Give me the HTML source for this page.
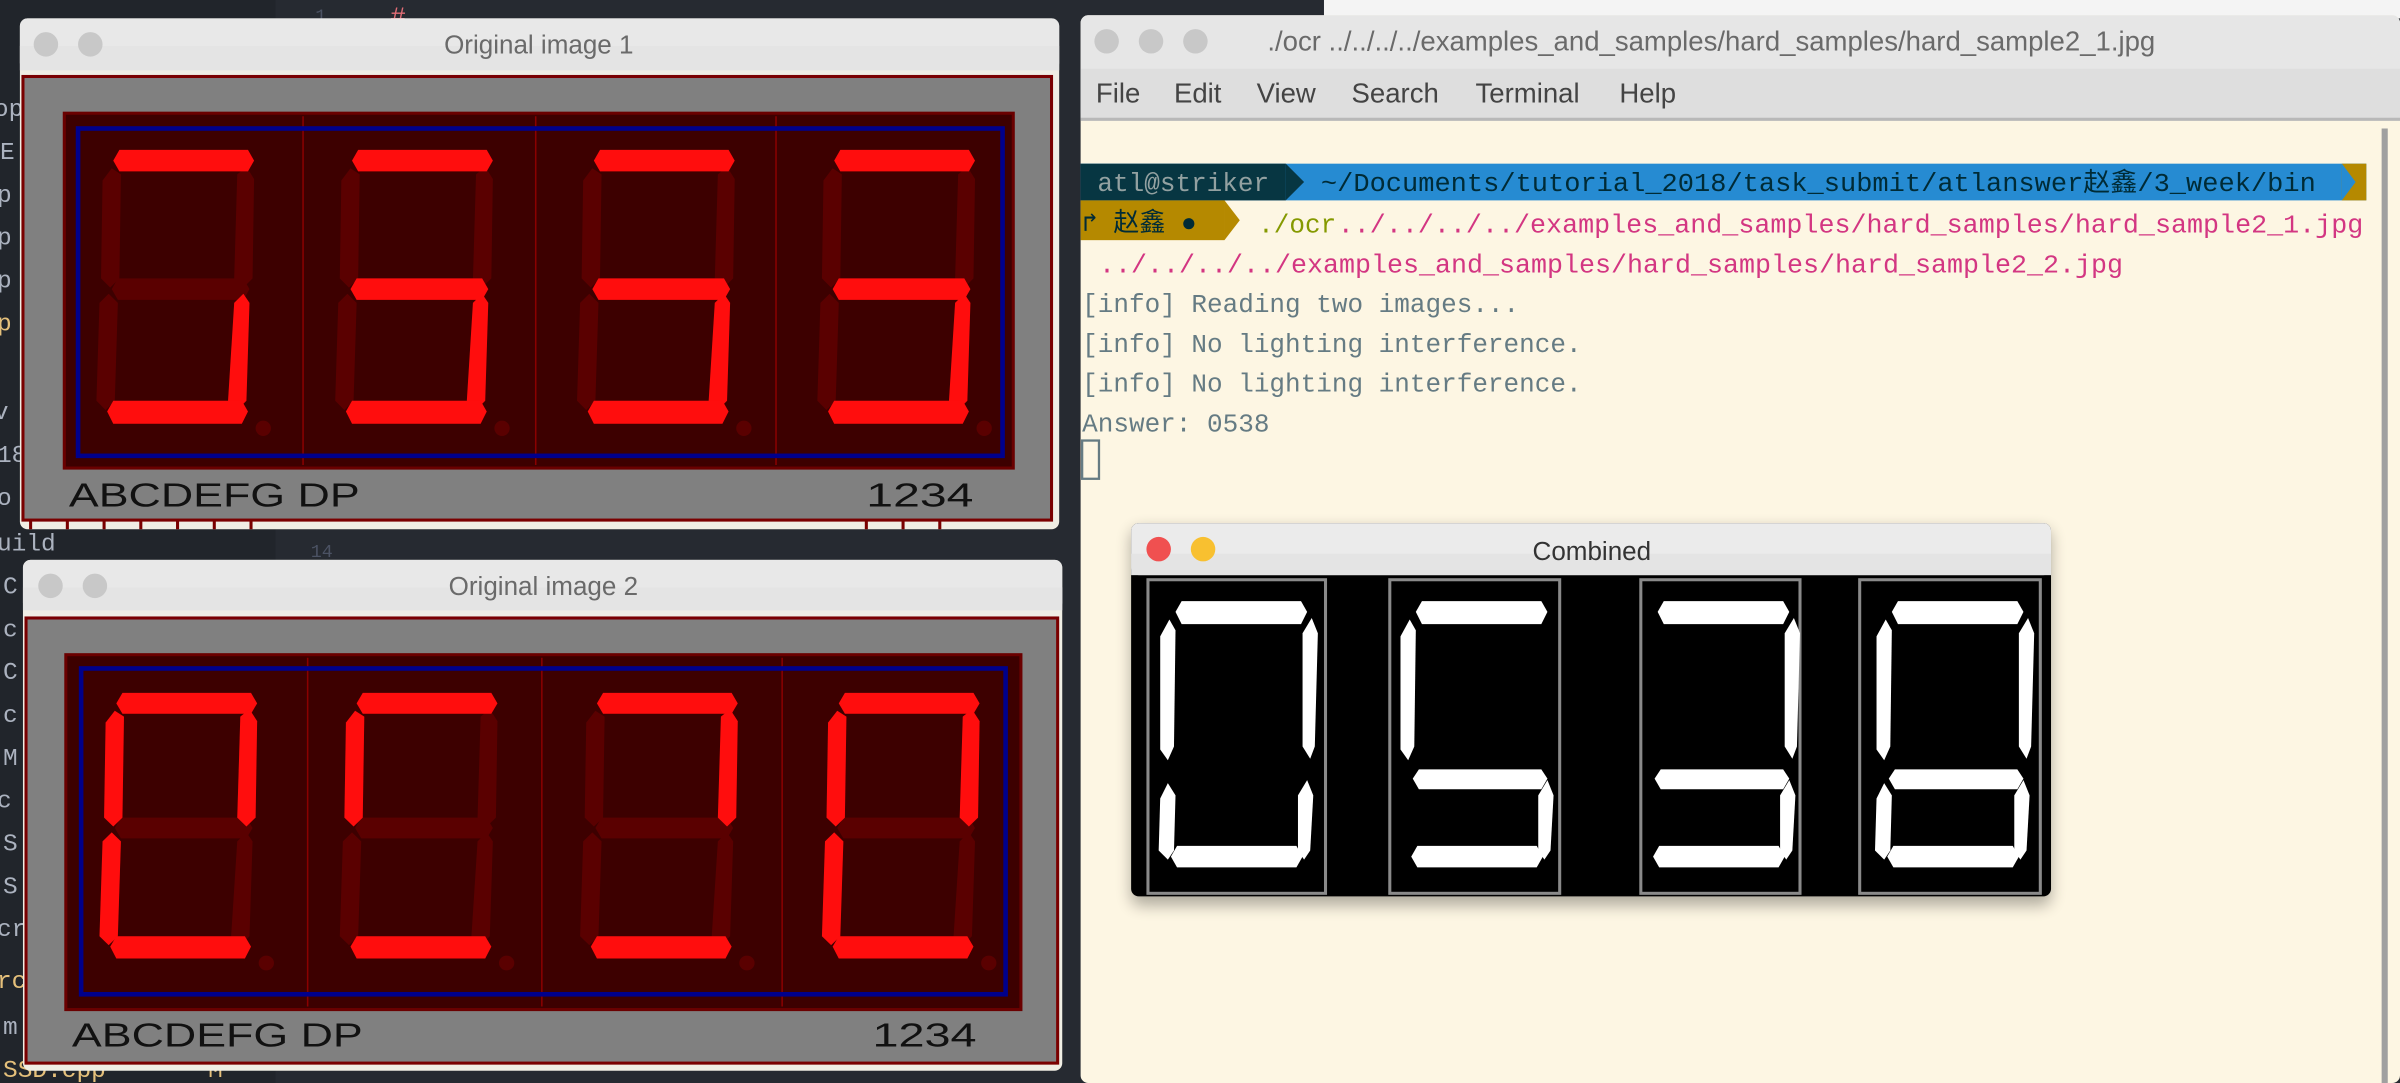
<!DOCTYPE html>
<html><head><meta charset="utf-8"><style>
html,body{margin:0;padding:0;width:2400px;height:1083px;overflow:hidden;background:#262a31}
svg{display:block}
.t{font-family:"Liberation Sans",sans-serif}
.m{font-family:"Liberation Mono","Noto Sans CJK SC",monospace}
</style></head><body>
<svg width="2400" height="1083" viewBox="0 0 1568 708" preserveAspectRatio="none" xmlns="http://www.w3.org/2000/svg">
<defs>
<filter id="sh" x="-10%" y="-10%" width="120%" height="130%"><feGaussianBlur stdDeviation="5"/></filter>
<g id="A"><polygon points="3,98 87,98 91,105 87,112 3,112 -1,105"/></g>
<g id="B"><polygon points="80,114 86,109 91,117 90,182 84,188 78,182"/></g>
<g id="F"><polygon points="-8,118 -2,110 4,114 3,182 -3,188 -9,182"/></g>
<g id="G"><polygon points="2,182 84,182 88,189 84,196 2,196 -2,189"/></g>
<g id="E"><polygon points="-10,198 -4,192 2,198 0,262 -6,268 -12,262"/></g>
<g id="C"><polygon points="78,198 84,192 88,198 86,262 80,268 74,262"/></g>
<g id="D"><polygon points="-1,262 83,262 87,269 83,277 -1,277 -5,269"/></g>
<g id="ALL" fill="#5a0000"><use href="#A"/><use href="#B"/><use href="#F"/><use href="#G"/><use href="#E"/><use href="#C"/><use href="#D"/><circle cx="97" cy="280" r="5"/></g>
<g id="ca"><polygon points="4,393 82,393 86,400 82,408 4,408 0,400"/></g>
<g id="cb"><polygon points="83,414 89,404 93,414 91,488 88,496 83,488"/></g>
<g id="cf"><polygon points="-10,416 -4,405 0,412 -1,488 -5,497 -10,490"/></g>
<g id="cg"><polygon points="2,503 82,503 86,509 82,516 2,516 -2,509"/></g>
<g id="ce"><polygon points="-10,522 -5,512 0,520 -1,556 -5,562 -11,556"/></g>
<g id="cc"><polygon points="80,520 86,510 90,520 88,556 84,562 80,556"/></g>
<g id="cd"><polygon points="1,553 79,553 83,560 79,567 1,567 -3,560"/></g>
</defs>

<rect x="0" y="0" width="706" height="708" fill="#262a31"/>
<rect x="0" y="0" width="180" height="708" fill="#21252b"/>
<rect x="865" y="0" width="703" height="12" fill="#f4f4f4"/>
<text x="255" y="16" class="m" font-size="17" fill="#e06c75">#</text>
<text x="206" y="14" class="m" font-size="12" fill="#4b5263">1</text>
<text x="203" y="364" class="m" font-size="12" fill="#4b5263">14</text>
<g class="m" font-size="16" fill="#abb2bf">
<text x="-4" y="76">op</text><text x="0" y="104">E</text><text x="-2" y="132">p</text><text x="-2" y="160">p</text><text x="-2" y="188">p</text><text x="-2" y="216" fill="#e5c07b">p</text><text x="-4" y="274">v</text><text x="-2" y="302">18</text><text x="-2" y="330">o</text>
<text x="-2" y="360">uild</text><text x="2" y="388">C</text><text x="2" y="416">c</text><text x="2" y="444">C</text><text x="2" y="472">c</text><text x="2" y="500">M</text><text x="-2" y="528">c</text><text x="2" y="556">S</text><text x="2" y="584">S</text><text x="-2" y="612">cr</text><text x="-2" y="646" fill="#e5c07b">rc</text><text x="2" y="676">m</text><text x="2" y="704" fill="#e5c07b">SSD.cpp</text><text x="136" y="704" fill="#e5c07b">M</text>
</g>

<rect x="13" y="12" width="679" height="334" rx="5" fill="#f0eee4"/>
<rect x="13" y="12" width="679" height="34" rx="5" fill="#e8e8e8"/>
<rect x="13" y="30" width="679" height="16" fill="#e4e4e4"/>
<circle cx="30" cy="29" r="8" fill="#c8c8c8"/><circle cx="59" cy="29" r="8" fill="#c8c8c8"/>
<text x="352" y="35" text-anchor="middle" class="t" font-size="17" fill="#6a6a6a">Original image 1</text>
<rect x="15" y="50" width="672" height="290" fill="#808080" stroke="#7a0000" stroke-width="2"/>
<rect x="42" y="74" width="620" height="232" fill="#3d0000" stroke="#6a0000" stroke-width="2"/>
<g stroke="#8a0000" stroke-width="1"><line x1="198" y1="76" x2="198" y2="304"/><line x1="350" y1="76" x2="350" y2="304"/><line x1="507" y1="76" x2="507" y2="304"/></g>
<rect x="51" y="84" width="604" height="214" fill="none" stroke="#00008b" stroke-width="3"/>
<g transform="translate(75,0)"><use href="#ALL"/><g fill="#ff0d0d"><use href="#A"/><use href="#C"/><use href="#D"/></g></g>
<g transform="translate(231,0)"><use href="#ALL"/><g fill="#ff0d0d"><use href="#A"/><use href="#G"/><use href="#C"/><use href="#D"/></g></g>
<g transform="translate(389,0)"><use href="#ALL"/><g fill="#ff0d0d"><use href="#A"/><use href="#G"/><use href="#C"/><use href="#D"/></g></g>
<g transform="translate(546,0)"><use href="#ALL"/><g fill="#ff0d0d"><use href="#A"/><use href="#G"/><use href="#C"/><use href="#D"/></g></g>
<text x="45" y="331" class="t" font-size="22" fill="#111" textLength="190" lengthAdjust="spacingAndGlyphs">ABCDEFG  DP</text>
<text x="566" y="331" class="t" font-size="22" fill="#111" textLength="70" lengthAdjust="spacingAndGlyphs">1234</text>
<g stroke="#7a0000" stroke-width="2"><line x1="20" y1="340" x2="20" y2="346"/><line x1="44" y1="340" x2="44" y2="346"/><line x1="68" y1="340" x2="68" y2="346"/><line x1="92" y1="340" x2="92" y2="346"/><line x1="116" y1="340" x2="116" y2="346"/><line x1="140" y1="340" x2="140" y2="346"/><line x1="164" y1="340" x2="164" y2="346"/><line x1="566" y1="340" x2="566" y2="346"/><line x1="590" y1="340" x2="590" y2="346"/><line x1="614" y1="340" x2="614" y2="346"/></g>

<rect x="15" y="366" width="679" height="334" rx="5" fill="#f0eee4"/>
<rect x="15" y="366" width="679" height="33" rx="5" fill="#e8e8e8"/>
<rect x="15" y="384" width="679" height="15" fill="#e4e4e4"/>
<circle cx="33" cy="383" r="8" fill="#c8c8c8"/><circle cx="62" cy="383" r="8" fill="#c8c8c8"/>
<text x="355" y="389" text-anchor="middle" class="t" font-size="17" fill="#6a6a6a">Original image 2</text>
<rect x="17" y="404" width="674" height="291" fill="#808080" stroke="#7a0000" stroke-width="2"/>
<rect x="43" y="428" width="624" height="232" fill="#3d0000" stroke="#6a0000" stroke-width="2"/>
<g stroke="#8a0000" stroke-width="1"><line x1="201" y1="430" x2="201" y2="658"/><line x1="354" y1="430" x2="354" y2="658"/><line x1="511" y1="430" x2="511" y2="658"/></g>
<rect x="53" y="437" width="604" height="213" fill="none" stroke="#00008b" stroke-width="3"/>
<g transform="translate(77,453) scale(1,0.97) translate(0,-98)"><use href="#ALL"/><g fill="#ff0d0d"><use href="#A"/><use href="#B"/><use href="#F"/><use href="#E"/><use href="#D"/></g></g>
<g transform="translate(234,453) scale(1,0.97) translate(0,-98)"><use href="#ALL"/><g fill="#ff0d0d"><use href="#A"/><use href="#F"/><use href="#D"/></g></g>
<g transform="translate(391,453) scale(1,0.97) translate(0,-98)"><use href="#ALL"/><g fill="#ff0d0d"><use href="#A"/><use href="#B"/><use href="#D"/></g></g>
<g transform="translate(549,453) scale(1,0.97) translate(0,-98)"><use href="#ALL"/><g fill="#ff0d0d"><use href="#A"/><use href="#B"/><use href="#F"/><use href="#E"/><use href="#D"/></g></g>
<text x="47" y="684" class="t" font-size="22" fill="#111" textLength="190" lengthAdjust="spacingAndGlyphs">ABCDEFG  DP</text>
<text x="570" y="684" class="t" font-size="22" fill="#111" textLength="68" lengthAdjust="spacingAndGlyphs">1234</text>

<rect x="706" y="10" width="862" height="698" rx="5" fill="#fdf6e3"/>
<rect x="706" y="10" width="862" height="68" rx="5" fill="#e6e6e6"/>
<rect x="706" y="45" width="862" height="33" fill="#dedede"/>
<line x1="706" y1="78" x2="1568" y2="78" stroke="#b8b8b8" stroke-width="2"/>
<circle cx="723" cy="27" r="8" fill="#c8c8c8"/><circle cx="752" cy="27" r="8" fill="#c8c8c8"/><circle cx="781" cy="27" r="8" fill="#c8c8c8"/>
<text x="828" y="33" class="t" font-size="18" fill="#6a6a6a">./ocr ../../../../examples_and_samples/hard_samples/hard_sample2_1.jpg</text>
<g class="t" font-size="18" fill="#444"><text x="716" y="67">File</text><text x="767" y="67">Edit</text><text x="821" y="67">View</text><text x="883" y="67">Search</text><text x="964" y="67">Terminal</text><text x="1058" y="67">Help</text></g>
<rect x="1556" y="84" width="4" height="624" fill="#a0a0a0"/>
<rect x="706" y="107" width="840" height="24" fill="#268bd2"/>
<rect x="706" y="107" width="134" height="24" fill="#073642"/>
<polygon points="840,107 852,119 840,131" fill="#073642"/>
<rect x="1530" y="107" width="16" height="24" fill="#b58900"/>
<polygon points="1530,107 1539,119 1530,131" fill="#268bd2"/>
<text x="717" y="125" class="m" font-size="17" fill="#93a1a1">atl@striker</text>
<text x="863" y="125" class="m" font-size="17" fill="#002b36" textLength="650" lengthAdjust="spacingAndGlyphs">~/Documents/tutorial_2018/task_submit/atlanswer赵鑫/3_week/bin</text>
<rect x="706" y="131" width="94" height="26" fill="#b58900"/>
<polygon points="800,131 810,144 800,157" fill="#b58900"/>
<text x="707" y="151" class="m" font-size="17" fill="#002b36">↱ 赵鑫 ●</text>
<text x="822" y="152" class="m" font-size="17" fill="#859900">./ocr</text>
<text x="874" y="152" class="m" font-size="17" fill="#d33682" textLength="670" lengthAdjust="spacingAndGlyphs">../../../../examples_and_samples/hard_samples/hard_sample2_1.jpg</text>
<text x="718" y="178" class="m" font-size="17" fill="#d33682" textLength="669" lengthAdjust="spacingAndGlyphs">../../../../examples_and_samples/hard_samples/hard_sample2_2.jpg</text>
<g class="m" font-size="17" fill="#657b83">
<text x="707" y="204">[info] Reading two images...</text>
<text x="707" y="230">[info] No lighting interference.</text>
<text x="707" y="256">[info] No lighting interference.</text>
<text x="707" y="282">Answer: 0538</text>
</g>
<rect x="707" y="288" width="11" height="25" fill="none" stroke="#657b83" stroke-width="1.5"/>

<rect x="739" y="346" width="601" height="246" rx="6" fill="#000" opacity="0.3" filter="url(#sh)"/>
<rect x="739" y="342" width="601" height="244" rx="5" fill="#000"/>
<rect x="739" y="342" width="601" height="34" rx="5" fill="#ebebeb"/>
<rect x="739" y="362" width="601" height="14" fill="#e4e4e4"/>
<circle cx="757" cy="359" r="8" fill="#f05050"/><circle cx="786" cy="359" r="8" fill="#f8c030"/>
<text x="1040" y="366" text-anchor="middle" class="t" font-size="17" fill="#333">Combined</text>
<g fill="none" stroke="#8a8a8a" stroke-width="2"><rect x="750" y="379" width="116" height="205"/><rect x="908" y="379" width="111" height="205"/><rect x="1072" y="379" width="104" height="205"/><rect x="1215" y="379" width="118" height="205"/></g>
<g fill="#fff">
<g transform="translate(768,0)"><use href="#ca"/><use href="#cb"/><use href="#cf"/><use href="#ce"/><use href="#cc"/><use href="#cd"/></g>
<g transform="translate(925,0)"><use href="#ca"/><use href="#cf"/><use href="#cg"/><use href="#cc"/><use href="#cd"/></g>
<g transform="translate(1083,0)"><use href="#ca"/><use href="#cb"/><use href="#cg"/><use href="#cc"/><use href="#cd"/></g>
<g transform="translate(1236,0)"><use href="#ca"/><use href="#cb"/><use href="#cf"/><use href="#cg"/><use href="#ce"/><use href="#cc"/><use href="#cd"/></g>
</g>
</svg>
</body></html>
